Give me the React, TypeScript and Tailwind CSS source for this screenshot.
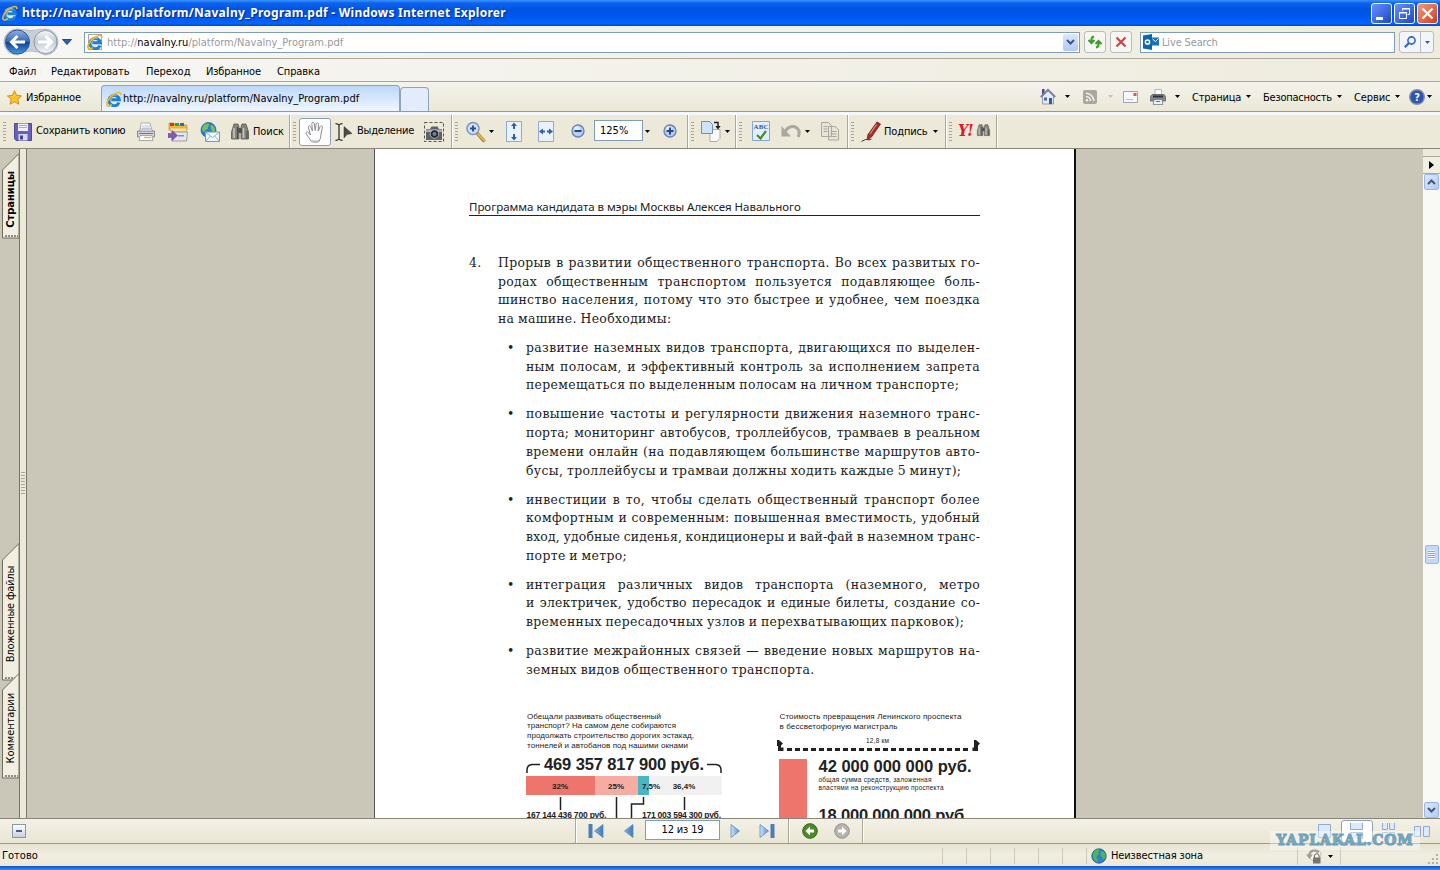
import type { ReactNode } from "react";
import clsx from "clsx";

type IconProps = { className?: string };

function Triangle({ className }: IconProps) {
  return (
    <svg viewBox="0 0 5 3" className={clsx("w-[5px] h-[3px] shrink-0", className)}>
      <path d="M0 0h5L2.5 3z" fill="currentColor" />
    </svg>
  );
}

function IeIcon({ className }: IconProps) {
  return (
    <svg viewBox="0 0 16 16" className={clsx("size-4 shrink-0", className)} fill="none">
      <circle cx="8" cy="8.500" r="6" fill="#d6ecfb" />
      <path d="M13 11.500A5.200 5.200 0 1 1 13.300 8.800H5.400" stroke="#1f7fd0" strokeWidth="3" />
      <path d="M4 6.500a4.300 4.300 0 0 1 6.500-2" stroke="#7ccaf6" strokeWidth="1.200" />
      <path d="M14.800 4.200C15.400.6 11.600.6 7 4 2.200 7.600-.2 12.600 1.300 14.400c.9 1 3 .3 4.700-.7" stroke="#eeb42c" strokeWidth="1.600" />
    </svg>
  );
}

function NavButtons() {
  return (
    <svg viewBox="0 0 60 30" className="w-[60px] h-[30px] shrink-0">
      <defs>
        <linearGradient id="back" x2="0" y2="1">
          <stop offset="0" stopColor="#8fb0e0" />
          <stop offset=".48" stopColor="#3b68b5" />
          <stop offset=".5" stopColor="#123c92" />
          <stop offset="1" stopColor="#3f9be8" />
        </linearGradient>
        <linearGradient id="fwd" x2="0" y2="1">
          <stop offset="0" stopColor="#f4f6f9" />
          <stop offset=".5" stopColor="#c3cbd6" />
          <stop offset="1" stopColor="#f5f8fb" />
        </linearGradient>
      </defs>
      <path d="M17 2q14 3 28 0a13 13 0 0 1 0 26q-14-8-28 0a13 13 0 0 1 0-26z" fill="#c9cfd6" stroke="#a3acb8" strokeWidth=".7" />
      <circle cx="17.500" cy="15" r="12" fill="url(#back)" stroke="#35558f" />
      <circle cx="45.500" cy="15" r="11.500" fill="url(#fwd)" stroke="#8c98a8" />
      <path d="M25 15H12m5.500-6L11.500 15l6 6" stroke="#fff" strokeWidth="3" fill="none" />
      <path d="M38 15h13m-5.500-6 6 6-6 6" stroke="#fff" strokeWidth="3.200" fill="none" />
    </svg>
  );
}

function Printer({ className }: IconProps) {
  return (
    <svg viewBox="0 0 20 20" className={clsx("shrink-0", className)}>
      <path d="M5 1h9l2 8H4z" fill="#fff" stroke="#9a9ca4" strokeWidth=".8" />
      <path d="M6 4h8M6 6h8" stroke="#b9c6dc" />
      <path d="M1.500 9h17v6h-17z" fill="#d0d2da" stroke="#81838c" strokeWidth=".9" />
      <path d="M3 9l1.500-2h11L17 9z" fill="#eceef2" stroke="#8f929b" strokeWidth=".7" />
      <path d="M3 11.500h14" stroke="#777a84" />
      <path d="M4 13.500h12l1 5H3z" fill="#fff" stroke="#9698a0" strokeWidth=".8" />
      <path d="M8 15.500h7" stroke="#e1c13b" strokeWidth="1.500" />
    </svg>
  );
}

function DarkPrinter() {
  return (
    <svg viewBox="0 0 16 16" className="size-4 shrink-0">
      <path d="M5 .5h6.500V6H5z" fill="#fff" stroke="#9aa3b5" strokeWidth=".8" />
      <path d="M2 5.500h12l1.700 2V12H.3V7.500z" fill="#85878b" stroke="#55575c" strokeWidth=".7" />
      <path d="M3 6.500h10v2H3z" fill="#2f3136" />
      <path d="M4 10.500h8l.8 5H3.200z" fill="#e9f1fb" stroke="#66707f" strokeWidth=".7" />
      <path d="M6 12.500h4" stroke="#3976c4" />
    </svg>
  );
}

function Disk() {
  return (
    <svg viewBox="0 0 18 18" className="size-[18px]">
      <path d="M.5.500h17v17H2l-1.500-2z" fill="#6a63b4" stroke="#4d4897" />
      <path d="M4 .5h10V8H4z" fill="#f1f0fa" />
      <path d="M5 2.500h8m-8 2h8" stroke="#a9a5d6" />
      <path d="M4.500 11h9v6.500h-9z" fill="#d8d6ee" />
      <path d="M6 12.500h3v4H6z" fill="#49448f" />
    </svg>
  );
}

function Organizer() {
  return (
    <svg viewBox="0 0 20 20" className="size-5">
      <path d="M1 1h5l1 2h12v5H1z" fill="#f3bd35" stroke="#b7882a" strokeWidth=".6" />
      <path d="M2 1h4v3H2z" fill="#d63222" />
      <path d="M7 1h4v3H7z" fill="#3c9a3a" />
      <path d="M12 1h4v3h-4z" fill="#2e63c4" />
      <path d="M2 6h17l-1 4H3z" fill="#fae29a" stroke="#cc9a35" strokeWidth=".6" />
      <path d="M4 10h15.500l-1 9H4z" fill="#e5e6ea" stroke="#8b8c96" strokeWidth=".8" />
      <path d="M10 13h6v1.500h-6z" fill="#8e8f9a" />
      <path d="M0 11.500h4V8.500l5.500 5-5.500 5v-3H0z" fill="#7f5cb2" stroke="#5e3f92" strokeWidth=".5" />
    </svg>
  );
}

function GlobeMail() {
  return (
    <svg viewBox="0 0 20 20" className="size-5">
      <circle cx="8.500" cy="8" r="7.500" fill="#2d7fcd" stroke="#1b569c" strokeWidth=".7" />
      <path d="M3 4c2-3 5-3 6-2s-1 2-1 4-3 1-3 3-3 0-3-2zM11 3c2 0 4 2 4 5s-2 3-3 1-2-4-1-6z" fill="#77c05e" />
      <path d="M5.500 10h14v9.500h-14z" fill="#f5faff" stroke="#6d9bd0" />
      <path d="M5.500 10l7 5.500 7-5.500m-14 9.500 5-5.500m9 5.500-5-5.500" stroke="#86aedc" fill="none" />
    </svg>
  );
}

function Binoculars({ className }: IconProps) {
  return (
    <svg viewBox="0 0 18 18" className={clsx("shrink-0", className)}>
      <path d="M3 1h4l1 3v12H.5V9zM15 1h-4l-1 3v12h7.500V9z" fill="#85857f" stroke="#55554f" strokeWidth=".8" />
      <path d="M7.500 5h3v5h-3z" fill="#4e4e4a" />
      <path d="M3 5v10M12.500 5v10" stroke="#c8c8c3" strokeWidth="1.500" />
      <path d="M6.500 4v12M16 8v8" stroke="#464642" />
    </svg>
  );
}

function Hand() {
  return (
    <svg viewBox="0 0 20 22" className="w-5 h-[22px]">
      <path
        d="M6 20C4.500 17 1.500 14 1 12.500c-.3-1.500 1.500-2 2.600-.7L5.500 14 3.500 6.500C3 4.500 5 4 5.600 5.600L7.500 10 6.800 3c0-2 2.200-2.200 2.500-.2L10.200 9.500l.9-6.500c.3-1.900 2.500-1.600 2.400.3L13.200 10l2-4.500c.7-1.500 2.600-.8 2.200.8L16 13c0 3-.8 5-2 7.500-1.500 1-6.500 1-8-.5z"
        fill="#fcfcfd"
        stroke="#8a8b95"
      />
      <path d="M7 19.500c1.500 1 5 1 6.500 0" stroke="#b9bac4" strokeWidth="1.500" fill="none" />
    </svg>
  );
}

function SelectTool() {
  return (
    <svg viewBox="0 0 17 18" className="w-[17px] h-[18px]">
      <path d="M.5.700q2.500 0 3.500 1.300Q5 .700 7.500.700M4 2v14M.5 17.300q2.500 0 3.500-1.300 1 1.300 3.500 1.300" stroke="#222" strokeWidth="1.200" fill="none" />
      <path d="M9 3.500v11.500l3-3.500 5-1z" fill="#4b4b4b" stroke="#333" strokeWidth=".5" />
    </svg>
  );
}

function Camera() {
  return (
    <svg viewBox="0 0 20 20" className="size-5">
      <path d="M.5.500h19v19H.5z" fill="none" stroke="#55554f" strokeDasharray="3 2" />
      <path d="M2 7h4l1.500-2.500h6L15 7h3v11H2z" fill="#5c626b" />
      <path d="M2 7.500h16v2.500H2z" fill="#aab1bb" />
      <circle cx="10.500" cy="12" r="4.300" fill="#25272c" stroke="#c3c9d2" strokeWidth=".8" />
      <circle cx="10.500" cy="12" r="2" fill="#6e86a6" />
    </svg>
  );
}

function ZoomTool() {
  return (
    <svg viewBox="0 0 20 22" className="w-5 h-[22px]">
      <path d="M11 12l7.500 8.500" stroke="#8f6a24" strokeWidth="3.400" />
      <path d="M11.500 12.500l7 7.500" stroke="#e5b94d" strokeWidth="2" />
      <circle cx="7" cy="7.500" r="6" fill="#cfe1f6" stroke="#7a93c2" strokeWidth="1.500" />
      <path d="M7 4.500v6m-3-3h6" stroke="#2c4f9e" strokeWidth="2" />
    </svg>
  );
}

function FitPage({ sideways }: { sideways?: boolean }) {
  return (
    <svg viewBox="0 0 16 22" className="w-4 h-[22px]">
      <path d="M.5.500h15v20H.5z" fill="#e9f1fb" stroke="#8fabd3" />
      {sideways ? (
        <path d="M1 10.500l4-3v2h2v2H5v2zM15 10.500l-4-3v2H9v2h2v2z" fill="#2f5fa8" />
      ) : (
        <path d="M8 1.500L5 5h2v3h2V5h2zM8 19.500L5 16h2v-3h2v3h2z" fill="#2f5fa8" />
      )}
    </svg>
  );
}

function RoundSign({ plus }: { plus?: boolean }) {
  return (
    <svg viewBox="0 0 14 14" className="size-3.5 mb-0.5">
      <circle cx="7" cy="7" r="6" fill="#b9cdee" stroke="#6580b6" strokeWidth="1.300" />
      <circle cx="6" cy="5" r="3" fill="#dfeafa" />
      <path d={plus ? "M7 3.500v7M3.500 7h7" : "M3.500 7h7"} stroke="#25458e" strokeWidth="2" />
    </svg>
  );
}

function RotateView() {
  return (
    <svg viewBox="0 0 20 22" className="w-5 h-[22px]">
      <path d="M9 8.500h10v9l-3 3H9z" fill="#fafafa" stroke="#aaa" />
      <path d="M.5.500h8l3 3v9H.5z" fill="#cfe2f8" stroke="#6b90c6" />
      <path d="M13 1.500h4v5" stroke="#1d1d1d" strokeWidth="1.400" fill="none" />
      <path d="M14.300 5h5.400L17 8.500z" fill="#1d1d1d" />
    </svg>
  );
}

function SpellCheck() {
  return (
    <svg viewBox="0 0 18 20" className="w-[18px] h-5 mb-0.5">
      <path d="M.5.500h17v19H.5z" fill="#e3eefb" stroke="#84a6d4" />
      <text x="1.500" y="8" fontSize="7" fontWeight="bold" fill="#305a9c" textLength="15" fontFamily="Liberation Serif, serif">ABC</text>
      <path d="M5 14l3.500 3.500L14 10" stroke="#3f8f2a" strokeWidth="2.200" fill="none" />
    </svg>
  );
}

function Undo() {
  return (
    <svg viewBox="0 0 20 16" className="w-5 h-4 mb-0.5">
      <path d="M4 9C7 2.500 15 1 18 8c.7 2 0 4-1 6" stroke="#aaa89e" strokeWidth="3" fill="none" />
      <path d="M.5 3v10.500h9.500z" fill="#aaa89e" />
    </svg>
  );
}

function Copy() {
  return (
    <svg viewBox="0 0 18 20" className="w-[18px] h-5 mb-0.5">
      <path d="M.5 1.500h7l3 3v11H.5zM7.500 5.500h6.500l3.500 3v10.500h-10z" fill="#e7e4d9" stroke="#aaa79b" />
      <path d="M2.500 5.500h4m-4 2.500h4m-4 2.500h4m3 0h6m-6 2.500h6m-6 2.500h6" stroke="#aaa79b" />
    </svg>
  );
}

function Pen() {
  return (
    <svg viewBox="0 0 20 22" className="w-5 h-[22px]">
      <path d="M16 1l3.500 2-9 13-4.500 3 1-5.500z" fill="#a5302a" stroke="#6e1a17" strokeWidth=".8" />
      <path d="M15.500 3.500L9 13" stroke="#e08a80" strokeWidth="1.200" />
      <path d="M.5 20.500q5-3 6-2t4-.5" stroke="#3b3b3b" fill="none" />
    </svg>
  );
}

function Home() {
  return (
    <svg viewBox="0 0 16 17" className="w-4 h-[17px]">
      <path d="M2 1h2.500v5H2z" fill="#4a4796" />
      <path d="M2.500 8.500V16h11V8L8 3z" fill="#e6eaf2" stroke="#8088a0" strokeWidth=".8" />
      <path d="M.7 9L8 1.700 15.300 9" stroke="#7682a6" strokeWidth="1.800" fill="none" />
      <path d="M9 10h3v6H9z" fill="#2c5d9e" />
      <path d="M4 9.500h3v3H4z" fill="#566a93" />
    </svg>
  );
}

function Globe() {
  return (
    <svg viewBox="0 0 16 16" className="size-4">
      <circle cx="8" cy="8" r="7.200" fill="#2f7fd0" stroke="#1d4f8f" strokeWidth=".8" />
      <path d="M2.500 4c2-3 6-3.500 6-2s-2 2-1 3.500-2 2-2 3.500 2 1.500 1 4-4-2-4.500-4 0-3.500.5-5zM11 3c2 .5 4 3 3.500 6s-2.500 3-3 1-2-2-2-3.500S10 4 11 3z" fill="#4cba50" />
    </svg>
  );
}

function ArrowCircle({ disabled }: { disabled?: boolean }) {
  return (
    <svg viewBox="0 0 16 16" className="size-4">
      <circle cx="8" cy="8" r="7.300" fill={disabled ? "#b5b3ab" : "#4d8a2c"} stroke={disabled ? "#96948c" : "#35651c"} />
      <path d={disabled ? "M4 6.500h4V3.500L12.500 8 8 12.500v-3H4z" : "M12 6.500H8V3.500L3.500 8 8 12.500v-3h4z"} fill="#fff" />
    </svg>
  );
}

// Page navigation arrow, optionally with the bar of the first/last page buttons
function PageArrow({ back, bar }: { back?: boolean; bar?: boolean }) {
  const gradient = back ? "arrowBack" : "arrowNext";

  return (
    <svg viewBox="0 0 16 16" className={clsx("size-4", back && "rotate-180")}>
      <defs>
        <linearGradient id={gradient}>
          <stop offset="0" stopColor={back ? "#3f7bb9" : "#cfe4f8"} />
          <stop offset="1" stopColor={back ? "#7fb0e0" : "#5590cc"} />
        </linearGradient>
      </defs>
      <path d="M1 1.500v13L9.500 8z" fill={`url(#${gradient})`} stroke="#5b8cc4" strokeWidth=".8" />
      {bar && <path d="M11.500 1h4v14h-4z" fill="#4b7db9" />}
    </svg>
  );
}

type SlotProps = { className: string; children?: ReactNode };

function Slot({ className, children }: SlotProps) {
  return <div className={clsx("flex items-center shrink-0 whitespace-nowrap", className)}>{children}</div>;
}

function Gripper({ className }: IconProps) {
  return (
    <div className={clsx("shrink-0 h-5", className)}>
      <div className="w-[3px] h-full bg-[repeating-linear-gradient(#a9a594_0_1px,#ece9d8_1px_3px)]" />
    </div>
  );
}

function Divider() {
  return <div className="w-0.5 shrink-0 self-stretch border-l border-[#aca899] bg-white" />;
}

function TitleBar() {
  return (
    <header className="h-[26px] flex items-center pl-[2px] pr-[2px] bg-[linear-gradient(#3a93ff_0,#0d63ee_12%,#0054e3_35%,#0058ee_65%,#0066ff_90%,#0047c8_100%)]">
      <IeIcon className="mr-1" />
      <h1 className="flex-1 whitespace-nowrap text-white font-bold text-[12px] tracking-[0.255px] font-['Noto_Sans',sans-serif] [text-shadow:1px_1px_1px_#0a2a80]">
        http://navalny.ru/platform/Navalny_Program.pdf - Windows Internet Explorer
      </h1>
      <div className="flex gap-[2px]">
        <div className="size-[21px] rounded-[3px] border border-white bg-linear-to-br from-[#6a90f5] to-[#1c46cc]">
          <div className="mt-[13px] ml-1 w-[7px] h-[3px] bg-white" />
        </div>
        <div className="size-[21px] rounded-[3px] border border-white bg-linear-to-br from-[#6a90f5] to-[#1c46cc]">
          <svg viewBox="0 0 19 19" className="size-[19px]" fill="none" stroke="#fff">
            <path d="M7.500 6.500v-2h7v6h-2M7 5h8" />
            <path d="M4.500 8.500h7v6h-7zM4 9h8" />
          </svg>
        </div>
        <div className="size-[21px] rounded-[3px] border border-white bg-linear-to-br from-[#f09a7c] to-[#cc3a10]">
          <svg viewBox="0 0 19 19" className="size-[19px]">
            <path d="M4.500 4.500l10 10m0-10l-10 10" stroke="#fff" strokeWidth="2.200" />
          </svg>
        </div>
      </div>
    </header>
  );
}

function AddressBar() {
  return (
    <div className="h-[33px] flex items-center border-b border-[#aca899] bg-linear-to-r from-[#f6f6f4] to-[#efecdd]">
      <Slot className="w-[62px] pl-0">
        <NavButtons />
      </Slot>
      <Slot className="w-[22px]">
        <svg viewBox="0 0 10 6" className="w-[10px] h-[6px]">
          <path d="M.5.500h9L5 5.500z" fill="#2b62a5" stroke="#1d4a85" />
        </svg>
      </Slot>
      <div className="w-[996px] h-[21px] shrink-0 flex items-center border border-[#7f9db9] bg-white">
        <div className="ml-[3px] mr-[5px] w-[14px] h-4 border border-[#a8a8a0] bg-white flex items-center justify-center">
          <IeIcon className="size-3" />
        </div>
        <p className="flex-1 pt-0.5 text-[#9a9a9a]">
          http://<span className="text-black">navalny.ru</span>/platform/Navalny_Program.pdf
        </p>
        <div className="w-[15px] h-[17px] mr-px rounded-[2px] bg-linear-to-b from-[#dde6fb] to-[#b2c8f4] flex items-center justify-center">
          <svg viewBox="0 0 9 6" className="w-[9px] h-[6px]">
            <path d="M1 1l3.500 3.500L8 1" stroke="#3c5688" strokeWidth="2" fill="none" />
          </svg>
        </div>
      </div>
      <div className="ml-1 size-[22px] shrink-0 rounded-[3px] border border-[#b8bcc2] flex items-center justify-center bg-[#f6f6f2]">
        <svg viewBox="0 0 16 14" className="w-4 h-3.5" fill="none" stroke="#3a9a28" strokeWidth="2">
          <path d="M7 1.500Q4.500 2 4.500 4.500v3M1.500 5l3 3 3-3" />
          <path d="M9 12.500q2.500-.5 2.500-3v-3M8.500 9l3-3 3 3" />
        </svg>
      </div>
      <div className="ml-1 size-[22px] shrink-0 rounded-[3px] border border-[#b8bcc2] flex items-center justify-center bg-[#f6f6f2]">
        <svg viewBox="0 0 12 12" className="size-3">
          <path d="M1.500 1.500l9 9m0-9l-9 9" stroke="#c5494b" strokeWidth="2.200" />
        </svg>
      </div>
      <div className="ml-2 w-[255px] h-[21px] shrink-0 flex items-center border border-[#7f9db9] bg-white">
        <svg viewBox="0 0 16 16" className="size-4 ml-[2px] mr-[3px]">
          <path d="M8 3.500h8v8H8z" fill="#1176bd" />
          <path d="M9.500 5l3 2.500 3-3" stroke="#fff" fill="none" />
          <path d="M0 1.500L9 0v16l-9-1.500z" fill="#0b68ae" />
          <circle cx="4.500" cy="8" r="2.100" fill="none" stroke="#fff" strokeWidth="1.500" />
        </svg>
        <span className="pt-0.5 tracking-[-0.15px] text-[#9a9a9a]">Live Search</span>
      </div>
      <div className="ml-1 w-[35px] h-[22px] shrink-0 rounded-[3px] border border-[#b8bcc2] flex bg-[#f2f5fa]">
        <div className="w-[21px] flex items-center justify-center border-r border-[#b8bcc2]">
          <svg viewBox="0 0 12 12" className="size-3" fill="none" stroke="#2f62d0">
            <circle cx="7.500" cy="4.500" r="3.600" strokeWidth="1.600" />
            <path d="M5 7L.8 11.200" strokeWidth="2.200" />
          </svg>
        </div>
        <div className="flex-1 flex items-center justify-center text-[#2c5fa8]">
          <Triangle />
        </div>
      </div>
    </div>
  );
}

function MenuBar() {
  return (
    <nav className="h-[23px] flex items-center pl-[9px] pt-[3px] tracking-[-0.03px] border-b border-[#aca899] bg-linear-to-r from-[#f6f6f4] to-[#efecdd]">
      <Slot className="w-[42px]">Файл</Slot>
      <Slot className="w-[95px]">Редактировать</Slot>
      <Slot className="w-[60px]">Переход</Slot>
      <Slot className="w-[71px] tracking-[-0.15px]">Избранное</Slot>
      <Slot className="w-[60px] tracking-[-0.1px]">Справка</Slot>
    </nav>
  );
}

function TabBar() {
  return (
    <div className="h-[30px] flex items-end border-b border-[#8d9aa8] bg-linear-to-b from-[#f4f3ec] to-[#ebe8d6]">
      <div className="w-[101px] h-full shrink-0 flex items-center pl-[7px] pt-0.5 tracking-[-0.15px] whitespace-nowrap">
        <svg viewBox="0 0 16 16" className="size-[15px] mr-1">
          <path d="M8 .8l2.200 4.900 5.300.6-4 3.600 1.200 5.300L8 12.500l-4.700 2.700 1.200-5.300-4-3.600 5.300-.6z" fill="#fbc52c" stroke="#d18a1c" />
        </svg>
        Избранное
      </div>
      <div className="w-[299px] h-[26px] shrink-0 flex items-center pl-1 rounded-t-[4px] border border-b-0 border-[#8fa3bd] bg-linear-to-b from-[#bcd8fb] to-[#f0f6fe] whitespace-nowrap">
        <IeIcon className="mr-px" />
        http://navalny.ru/platform/Navalny_Program.pdf
      </div>
      <div className="w-[29px] h-[24px] shrink-0 rounded-t-[4px] border border-b-0 border-[#8fa3bd] bg-[#e2ecfa]" />
      <div className="h-full flex items-center ml-[611px]">
        <Slot className="w-[25px]"><Home /></Slot>
        <Slot className="w-[18px]"><Triangle /></Slot>
        <Slot className="w-[25px]">
          <svg viewBox="0 0 14 14" className="size-3.5">
            <rect width="14" height="14" rx="2" fill="#aaa89e" />
            <g fill="none" stroke="#f3f2ec" strokeWidth="1.500">
              <path d="M3 6.500a4.500 4.500 0 0 1 4.500 4.500M3 3.200A8 8 0 0 1 10.800 11" />
            </g>
            <circle cx="4" cy="10.200" r="1.200" fill="#f3f2ec" />
          </svg>
        </Slot>
        <Slot className="w-[15px] text-[#c8c5b8]"><Triangle /></Slot>
        <Slot className="w-[27px]">
          <svg viewBox="0 0 15 12" className="w-[15px] h-3">
            <path d="M.5.500h14v11H.5z" fill="#f8f8fb" stroke="#a0a3b6" />
            <path d="M10.500 2h3v3h-3z" fill="#d25a58" />
            <path d="M3 8.500h7" stroke="#b8bccb" />
          </svg>
        </Slot>
        <Slot className="w-[25px]"><DarkPrinter /></Slot>
        <Slot className="w-[17px]"><Triangle /></Slot>
        <Slot className="w-[54px] pt-0.5 tracking-[-0.2px]">Страница</Slot>
        <Slot className="w-[17px]"><Triangle /></Slot>
        <Slot className="w-[74px] pt-0.5 tracking-[-0.25px]">Безопасность</Slot>
        <Slot className="w-[17px]"><Triangle /></Slot>
        <Slot className="w-[43px] pt-0.5 tracking-[-0.1px]">Сервис</Slot>
        <Slot className="w-[12px] -ml-[2px] mr-[2px]"><Triangle /></Slot>
        <Slot className="w-[18px]">
          <svg viewBox="0 0 16 16" className="size-4">
            <circle cx="8" cy="8" r="7.300" fill="#2d53b4" stroke="#8890a4" strokeWidth="1.400" />
            <text x="8" y="12" fontSize="11" fontWeight="bold" fill="#fff" textAnchor="middle">?</text>
          </svg>
        </Slot>
        <Triangle />
      </div>
    </div>
  );
}

function PdfToolbar() {
  return (
    <div className="h-[34px] flex items-center pl-[3px] border-b border-[#8a877a] bg-[#ece9d8]">
      <Gripper className="w-[11px]" />
      <Slot className="w-[22px]"><Disk /></Slot>
      <Slot className="w-[100px] pb-0.5 tracking-[-0.17px]">Сохранить копию</Slot>
      <Slot className="w-[32px]"><Printer className="size-5" /></Slot>
      <Slot className="w-[32px]"><Organizer /></Slot>
      <Slot className="w-[31px]"><GlobeMail /></Slot>
      <Slot className="w-[22px]"><Binoculars className="size-[18px]" /></Slot>
      <Slot className="w-[36px] tracking-[-0.1px]">Поиск</Slot>
      <Divider />
      <Gripper className="w-[8px] pl-[2px]" />
      <div className="w-[32px] h-[28px] shrink-0 flex items-center justify-center rounded-[3px] border border-[#8ba0b8] bg-white">
        <Hand />
      </div>
      <Slot className="w-[26px] pl-1"><SelectTool /></Slot>
      <Slot className="w-[67px] pb-0.5 tracking-[-0.2px]">Выделение</Slot>
      <Slot className="w-[27px]"><Camera /></Slot>
      <Divider />
      <Gripper className="w-[13px] pl-[2px]" />
      <Slot className="w-[23px]"><ZoomTool /></Slot>
      <Slot className="w-[17px]"><Triangle /></Slot>
      <Slot className="w-[32px]"><FitPage /></Slot>
      <Slot className="w-[33px]"><FitPage sideways /></Slot>
      <Slot className="w-[23px]"><RoundSign /></Slot>
      <div className="w-[49px] h-[21px] mb-0.5 shrink-0 flex items-center pl-[5px] border border-[#7f9db9] bg-white">125%</div>
      <Slot className="w-[20px] pl-[2px]"><Triangle /></Slot>
      <Slot className="w-[24px]"><RoundSign plus /></Slot>
      <Divider />
      <Gripper className="w-[12px] pl-[2px]" />
      <Slot className="w-[24px]"><RotateView /></Slot>
      <Slot className="w-[10px]"><Triangle /></Slot>
      <Divider />
      <Gripper className="w-[15px] pl-[2px]" />
      <Slot className="w-[29px]"><SpellCheck /></Slot>
      <Slot className="w-[24px]"><Undo /></Slot>
      <Slot className="w-[16px]"><Triangle /></Slot>
      <Slot className="w-[26px]"><Copy /></Slot>
      <Divider />
      <Gripper className="w-[12px] pl-[2px]" />
      <Slot className="w-[23px]"><Pen /></Slot>
      <Slot className="w-[49px] tracking-[-0.15px]">Подпись</Slot>
      <Slot className="w-[12px]"><Triangle /></Slot>
      <Divider />
      <Gripper className="w-[11px] pl-[2px]" />
      <Slot className="w-[38px] pb-0.5">
        <span className="w-[18px] font-black italic text-[16px] leading-none text-[#e0142c] font-['DejaVu_Serif_Condensed','DejaVu_Serif',serif] tracking-[-1px]">Y!</span>
        <Binoculars className="w-[15px] h-[13px]" />
      </Slot>
      <Divider />
    </div>
  );
}

type SideTabProps = { label: string; height: number; className: string; textClass: string };

function SideTab({ label, height, className, textClass }: SideTabProps) {
  return (
    <div className={clsx("relative w-[17px] ml-[2px] flex items-center justify-center shrink-0", className)} style={{ height }}>
      <svg className="absolute inset-0 size-full" viewBox={`0 0 17 ${height}`}>
        <path d={`M17 .5L.5 17v${height - 18}H17z`} fill="#f1efe2" stroke="#6f6c60" />
        <path d={`M3 ${height - 3}H16`} stroke="#8f8c7e" strokeWidth="2" strokeDasharray="2 1" />
      </svg>
      <span className={clsx("relative [writing-mode:vertical-rl] rotate-180 whitespace-nowrap leading-[15px]", textClass)}>{label}</span>
    </div>
  );
}

const INTRO = [
  "Прорыв в развитии общественного транспорта. Во всех развитых го-",
  "родах общественным транспортом пользуется подавляющее боль-",
  "шинство населения, потому что это быстрее и удобнее, чем поездка",
  "на машине. Необходимы:",
];

const BULLETS = [
  [
    "развитие наземных видов транспорта, двигающихся по выделен-",
    "ным полосам, и эффективный контроль за исполнением запрета",
    "перемещаться по выделенным полосам на личном транспорте;",
  ],
  [
    "повышение частоты и регулярности движения наземного транс-",
    "порта; мониторинг автобусов, троллейбусов, трамваев в реальном",
    "времени онлайн (на подавляющем большинстве маршрутов авто-",
    "бусы, троллейбусы и трамваи должны ходить каждые 5 минут);",
  ],
  [
    "инвестиции в то, чтобы сделать общественный транспорт более",
    "комфортным и современным: повышенная вместимость, удобный",
    "вход, удобные сиденья, кондиционеры и вай-фай в наземном транс-",
    "порте и метро;",
  ],
  [
    "интеграция различных видов транспорта (наземного, метро",
    "и электричек, удобство пересадок и единые билеты, создание со-",
    "временных пересадочных узлов и перехватывающих парковок);",
  ],
  [
    "развитие межрайонных связей — введение новых маршрутов на-",
    "земных видов общественного транспорта.",
  ],
];

type LinesProps = { lines: string[]; indented?: boolean };

function Lines({ lines, indented }: LinesProps) {
  return (
    <div className="flex-1 min-w-0">
      {lines.map((line, i) => (
        <p
          key={line}
          className={clsx(
            "whitespace-nowrap",
            i < lines.length - 1 ? "[text-align-last:justify]" : "text-left",
            // the longest lines of the narrow column are set tighter
            indented && line.length > 61 && "tracking-[0.17px]"
          )}
        >
          {line}
        </p>
      ))}
    </div>
  );
}

// Both infographics at the foot of the page; the page edge cuts them off
function Infographics() {
  return (
    <svg viewBox="520 700 470 118" className="w-[470px] h-[118px] ml-[145px] shrink-0" fontFamily="Liberation Sans, Arial, sans-serif" fill="#222">
      <g fontSize="8">
        <text x="527" y="718.500" textLength="134">Обещали развивать общественный</text>
        <text x="527" y="728" textLength="149">транспорт? На самом деле собираются</text>
        <text x="527" y="738" textLength="167">продолжать строительство дорогих эстакад,</text>
        <text x="527" y="747.500" textLength="161">тоннелей и автобанов под нашими окнами</text>
        <text x="779.500" y="719" textLength="182">Стоимость превращения Ленинского проспекта</text>
        <text x="779.500" y="729" textLength="118">в бессветофорную магистраль</text>
      </g>
      <g fontSize="6.500">
        <text x="866" y="743" textLength="23">12,8 км</text>
        <text x="818.500" y="781.500" textLength="113">общая сумма средств, заложенная</text>
        <text x="818.500" y="789.500" textLength="125">властями на реконструкцию проспекта</text>
      </g>
      <g fontSize="16.500" fontWeight="bold">
        <text x="544" y="770" textLength="160">469 357 817 900 руб.</text>
        <text x="818.500" y="772" textLength="153">42 000 000 000 руб.</text>
        <text x="818.500" y="821" textLength="150">18 000 000 000 руб.</text>
      </g>
      <g fill="none" stroke="#222" strokeWidth="1.500">
        <path d="M527 773v-3q0-5 5-5.500h8M707 764.500h9q5 .5 5 5.500v3" />
        <path d="M560.500 797v13M616.500 797v21M643.500 797v7h-12v14M684.500 797v13" />
      </g>
      <path d="M526 776h69v19h-69z" fill="#ee756b" />
      <path d="M595 776h43v19h-43z" fill="#f7aca3" />
      <path d="M638 776h11v19h-11z" fill="#4cb5c4" />
      <path d="M649 776h73v19h-73z" fill="#f1f1f1" />
      <g fontSize="8" fontWeight="bold" textAnchor="middle">
        <text x="560" y="789">32%</text>
        <text x="616" y="789">25%</text>
        <text x="651" y="789">7,5%</text>
        <text x="684" y="789">36,4%</text>
      </g>
      <g fontSize="8.500" fontWeight="bold">
        <text x="526.500" y="818" textLength="80">167 144 436 700 руб.</text>
        <text x="642" y="818" textLength="79">171 003 594 300 руб.</text>
      </g>
      <path d="M787 749.500h184" stroke="#222" strokeWidth="3" strokeDasharray="5 3" />
      <path d="M777 740h2l4 3.500-2 2v2h2.500v3.500H778v-5h-1zM974 740h2l4 3.500-2 2v5.500h-5.500v-3.500h1.500z" />
      <path d="M779 759h28v59h-28z" fill="#ee756b" />
    </svg>
  );
}

function Document() {
  return (
    <main className="w-[702px] h-full shrink-0 overflow-hidden flex flex-col bg-white border-l border-[#555] border-r-2 border-r-[#111] text-[#222]">
      <h2 className="mt-[49px] ml-[94px] w-[511px] h-[18px] shrink-0 border-b border-[#222] whitespace-nowrap leading-[17px] font-['Noto_Sans',sans-serif] text-[11.5px] tracking-[-0.03px]">
        Программа кандидата в мэры Москвы Алексея Навального
      </h2>
      <div className="mt-[37px] ml-[94px] w-[511px] h-[447px] shrink-0 flex flex-col gap-[10.400px] font-['DejaVu_Serif_Condensed','DejaVu_Serif',serif] text-[13.800px] leading-[18.670px] tracking-[0.34px] [word-spacing:-0.6px]">
        <div className="flex">
          <span className="w-[29px] shrink-0">4.</span>
          <Lines lines={INTRO} />
        </div>
        {BULLETS.map((lines) => (
          <div key={lines[0]} className="flex pl-[38px]">
            <span className="w-[19px] shrink-0">•</span>
            <Lines lines={lines} indented />
          </div>
        ))}
      </div>
      <Infographics />
    </main>
  );
}

function ScrollButton({ down }: { down?: boolean }) {
  return (
    <div className="w-[15px] h-4 shrink-0 rounded-[2px] border border-[#9db5e8] bg-linear-to-br from-[#dce7fd] to-[#b5caf6] flex items-center justify-center">
      <svg viewBox="0 0 9 6" className={clsx("w-[9px] h-[6px]", !down && "rotate-180")}>
        <path d="M1 1l3.500 3.500L8 1" stroke="#42577f" strokeWidth="2" fill="none" />
      </svg>
    </div>
  );
}

function Workspace() {
  return (
    <div className="h-[669px] flex bg-[#cbc7b8]">
      <aside className="w-[20px] shrink-0 flex flex-col border-r border-[#77746a]">
        <SideTab label="Страницы" height={86} className="mt-[4px] pt-[7px]" textClass="font-bold" />
        <SideTab label="Вложенные файлы" height={138} className="mt-[304px] pt-[5px]" textClass="tracking-[-0.2px]" />
        <SideTab label="Комментарии" height={106} className="-mt-[8px] pt-[5px]" textClass="tracking-[-0.1px]" />
      </aside>
      <div className="w-[7px] shrink-0 flex items-center border-r border-[#77746a] bg-[#ece9d8]">
        <div className="w-1 h-6 ml-px bg-[repeating-linear-gradient(#a9a594_0_1px,#ece9d8_1px_3px)]" />
      </div>
      <div className="flex-1 flex pl-[347px]">
        <Document />
      </div>
      <div className="w-[17px] shrink-0 flex flex-col items-center bg-[#f9f9f5]">
        <div className="w-full h-[8px] shrink-0 border-b border-[#aca899] bg-[#ece9d8]" />
        <div className="w-full h-[17px] shrink-0 flex items-center justify-center border-b border-[#aca899] bg-[#f1efe2]">
          <svg viewBox="0 0 5 8" className="w-[5px] h-2">
            <path d="M0 0v8l5-4z" />
          </svg>
        </div>
        <ScrollButton />
        <div className="mt-[355px] w-[14px] h-[19px] shrink-0 rounded-[2px] border border-[#9db5e8] bg-[#c6d6fb] flex items-center justify-center">
          <div className="w-[7px] h-[9px] bg-[repeating-linear-gradient(#eef4fe_0_1px,#8ea7dc_1px_2px)]" />
        </div>
        <div className="flex-1" />
        <ScrollButton down />
      </div>
    </div>
  );
}

function PageBar() {
  return (
    <div className="relative h-[26px] flex items-center border-y border-t-[#8a877a] border-b-[#9b988a] bg-linear-to-b from-[#f3f1e6] to-[#e9e6d4]">
      <Slot className="w-[575px] pl-[12px]">
        <div className="w-[14px] h-[14px] border border-[#8d95a8] bg-linear-to-b from-white to-[#c8d0e0] flex items-center justify-center">
          <div className="w-1.5 h-0.5 bg-[#4b5f8c]" />
        </div>
      </Slot>
      <Divider />
      <Slot className="w-[43px] pl-[11px]"><PageArrow back bar /></Slot>
      <Slot className="w-[25px] -ml-[2px]"><PageArrow back /></Slot>
      <div className="w-[75px] h-[20px] ml-[2px] mb-0.5 shrink-0 flex items-center justify-center tracking-[-0.15px] border border-[#7f9db9] bg-white">12 из 19</div>
      <Slot className="w-[39px] pl-[10px]"><PageArrow /></Slot>
      <Slot className="w-[29px]"><PageArrow bar /></Slot>
      <Divider />
      <Slot className="w-[44px] pl-[12px]"><ArrowCircle /></Slot>
      <Slot className="w-[28px]"><ArrowCircle disabled /></Slot>
      <Divider />
      <div className="w-[32px] h-[23px] ml-[477px] shrink-0 rounded-[3px] border border-[#8ba0b8] bg-white" />
      <svg viewBox="0 0 112 16" className="relative w-[112px] h-4 -ml-[55px] shrink-0" fill="#dbe9fa" stroke="#8fabd3">
        <path d="M.5 1.500h12v13H.5zM32.500 0v6.500h12V0M32.500 16V9.500h12V16M64.500 0v6.500h5V0M71.500 0v6.500h5V0M64.500 16V9.500h5V16M71.500 16V9.500h5V16M96.500 3.500h6v10h-6zM105.500 3.500h6v10h-6z" />
      </svg>
      <div className="absolute left-[1270px] top-[12px] w-[150px] h-[19px] z-10 bg-white/40 flex items-center justify-center pb-0.5">
        <span className="font-['DejaVu_Serif',serif] font-black text-[14px] leading-none tracking-[0.85px] text-[#6f9fb5]/90 [-webkit-text-stroke:1px_#6f9fb5]">YAPLAKAL.COM</span>
      </div>
    </div>
  );
}

function StatusBar() {
  return (
    <footer className="h-[22px] flex items-center pt-0.5 bg-linear-to-b from-[#e6e3d2] via-[#f0eee1] to-[#ece9d8]">
      <Slot className="w-[942px] pl-[2px]">Готово</Slot>
      {[0, 1, 2, 3, 4, 5].map((n) => (
        <div key={n} className="w-6 self-stretch my-0.5 shrink-0 border-l border-[#cdc9b8]" />
      ))}
      <div className="w-[5px] self-stretch my-0.5 shrink-0 border-l border-[#cdc9b8]" />
      <Slot className="w-[20px]"><Globe /></Slot>
      <Slot className="w-[186px] tracking-[-0.12px]">Неизвестная зона</Slot>
      <Slot className="w-[24px] h-[18px] pl-[8px] border-l border-[#cdc9b8]">
        <svg viewBox="0 0 16 16" className="size-4 shrink-0">
          <circle cx="9" cy="7" r="6" fill="#f4f3ee" stroke="#c4c2b8" />
          <path d="M3 8c1-6 7-7 9.500-3.500" stroke="#9f9e98" strokeWidth="2.400" fill="none" />
          <path d="M0 6.500h7L3.500 11z" fill="#9f9e98" />
          <path d="M8.500 10V8a2.300 2.300 0 0 1 4.600 0v2" stroke="#66645e" fill="none" />
          <path d="M7 9.500h7.500v6H7z" fill="#77756f" />
        </svg>
      </Slot>
      <Slot className="w-[19px] pl-[7px]"><Triangle /></Slot>
      <div className="flex-1 h-[18px] border-l border-[#cdc9b8] flex justify-end items-end pr-px">
        <svg viewBox="0 0 11 11" className="size-[11px]" fill="#b5b19f">
          <path d="M8 0h2v2H8zM4 4h2v2H4zM8 4h2v2H8zM0 8h2v2H0zM4 8h2v2H4zM8 8h2v2H8z" />
        </svg>
      </div>
    </footer>
  );
}

export default function App() {
  return (
    <div className="w-[1440px] h-[870px] overflow-hidden flex flex-col bg-[#ece9d8] text-black text-[11px] leading-[14px] font-['DejaVu_Sans_Condensed','DejaVu_Sans',sans-serif]">
      <TitleBar />
      <AddressBar />
      <MenuBar />
      <TabBar />
      <div className="h-[3px] shrink-0 bg-[#f4f7fb]" />
      <PdfToolbar />
      <Workspace />
      <PageBar />
      <StatusBar />
      <div className="flex-1 bg-linear-to-b from-[#1550c8] to-[#3a8ae8]" />
    </div>
  );
}
